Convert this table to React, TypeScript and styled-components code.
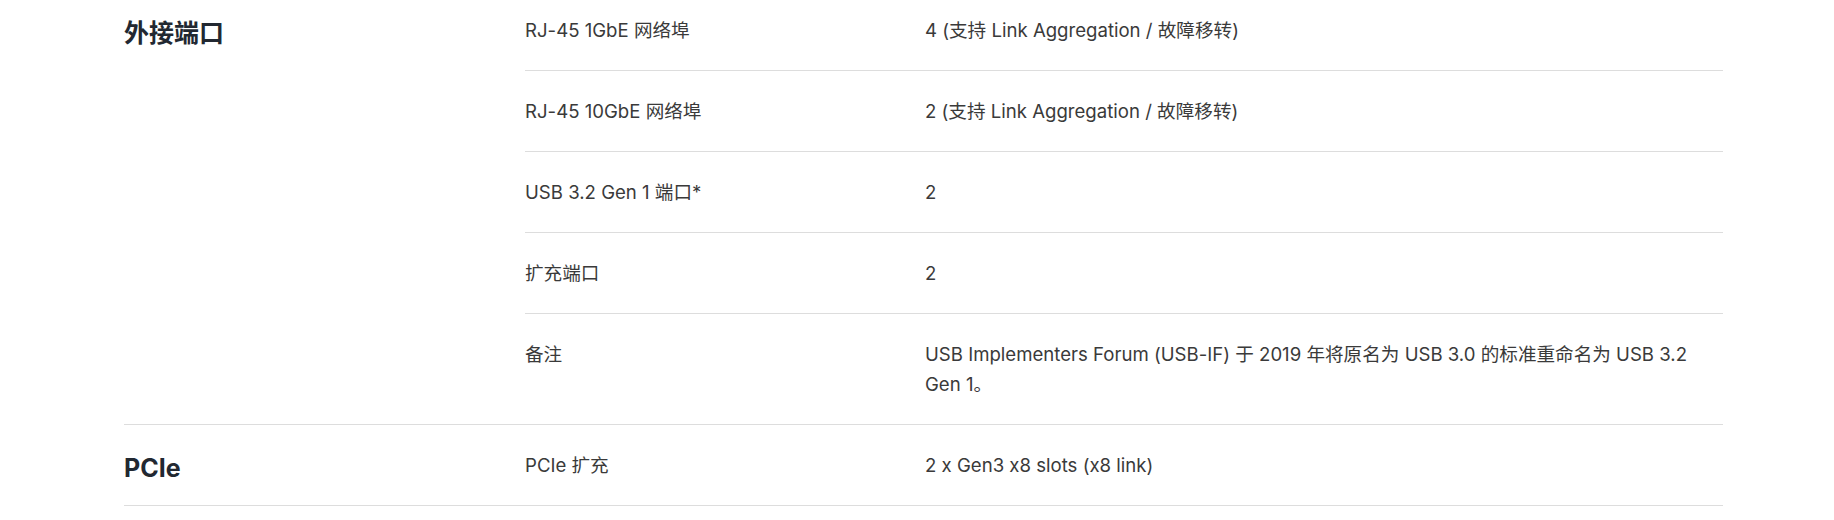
import React from 'react';
import styled, { createGlobalStyle } from 'styled-components';

const GlobalStyle = createGlobalStyle`
  html, body {
    margin: 0;
    padding: 0;
    background: #ffffff;
  }
  body {
    font-family: Inter, "Noto Sans CJK SC", sans-serif;
    font-feature-settings: "calt" 0;
    color: #333333;
    -webkit-font-smoothing: antialiased;
  }
`;

const SpecTable = styled.div`
  width: 1599px;
  margin-top: -10px;
  padding-left: 124px;
`;

const Group = styled.section`
  display: grid;
  grid-template-columns: 401px 1fr;
  border-bottom: 1px solid #dddddd;
`;

const GroupTitle = styled.h3`
  margin: 0;
  padding-top: 25px;
  font-size: 25px;
  line-height: 36px;
  font-weight: 700;
  color: #222831;
`;

const Rows = styled.div`
  display: flex;
  flex-direction: column;
`;

const Row = styled.div`
  display: grid;
  grid-template-columns: 400px 1fr;
  padding: 25px 0;
  font-size: 18.6px;
  line-height: 30px;
  & + & {
    border-top: 1px solid #dddddd;
  }
`;

const Label = styled.div`
  color: #3a3a3a;
`;

const Value = styled.div`
  color: #3a3a3a;
`;

type Spec = { label: string; value: string };
type SpecGroup = { title: string; rows: Spec[] };

const groups: SpecGroup[] = [
  {
    title: '外接端口',
    rows: [
      { label: 'RJ-45 1GbE 网络埠', value: '4 (支持 Link Aggregation / 故障移转)' },
      { label: 'RJ-45 10GbE 网络埠', value: '2 (支持 Link Aggregation / 故障移转)' },
      { label: 'USB 3.2 Gen 1 端口*', value: '2' },
      { label: '扩充端口', value: '2' },
      {
        label: '备注',
        value: 'USB Implementers Forum (USB-IF) 于 2019 年将原名为 USB 3.0 的标准重命名为 USB 3.2 Gen 1。',
      },
    ],
  },
  {
    title: 'PCIe',
    rows: [{ label: 'PCIe 扩充', value: '2 x Gen3 x8 slots (x8 link)' }],
  },
];

export default function App() {
  return (
    <>
      <GlobalStyle />
      <SpecTable>
        {groups.map((g) => (
          <Group key={g.title}>
            <GroupTitle>{g.title}</GroupTitle>
            <Rows>
              {g.rows.map((r) => (
                <Row key={r.label}>
                  <Label>{r.label}</Label>
                  <Value>{r.value}</Value>
                </Row>
              ))}
            </Rows>
          </Group>
        ))}
      </SpecTable>
    </>
  );
}
